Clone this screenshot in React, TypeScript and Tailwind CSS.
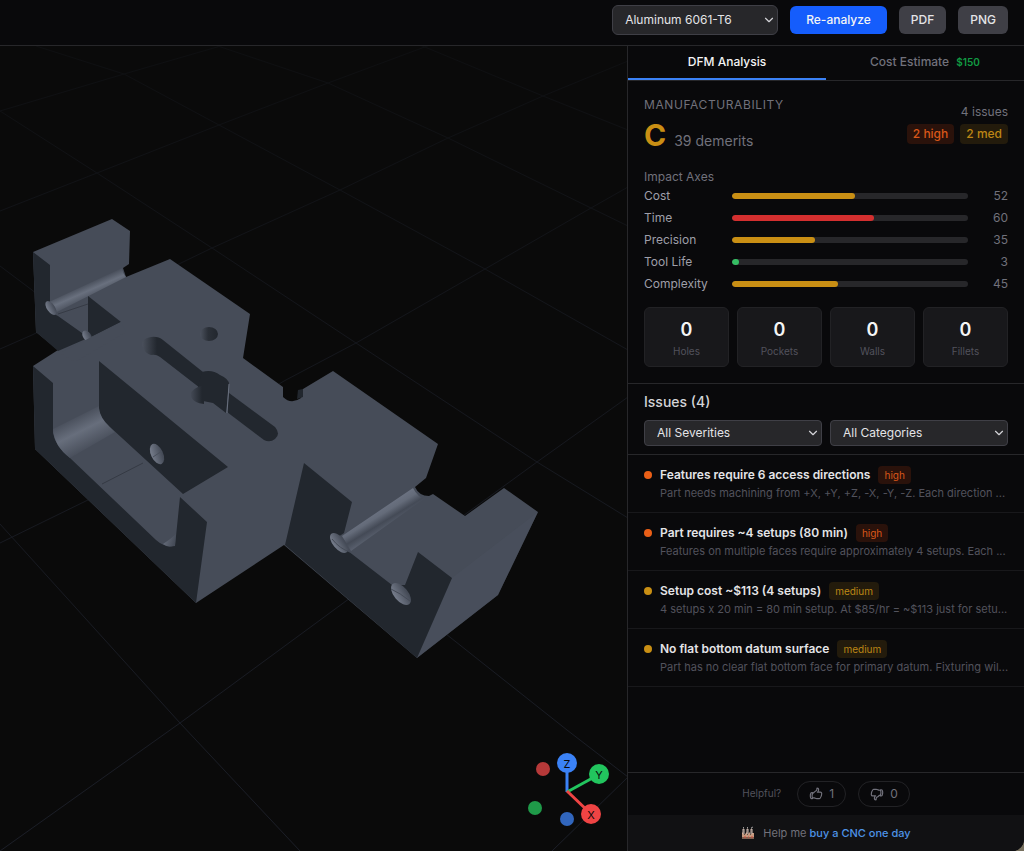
import { ReactNode, useState } from 'react';
import { ChevronDown } from 'lucide-react';
import { HiOutlineHandThumbDown, HiOutlineHandThumbUp } from 'react-icons/hi2';
import clsx from 'clsx';

const axes = [
  { label: 'Cost', value: 52, color: 'bg-[#c98f14]' },
  { label: 'Time', value: 60, color: 'bg-[#d42f2f]' },
  { label: 'Precision', value: 35, color: 'bg-[#c98f14]' },
  { label: 'Tool Life', value: 3, color: 'bg-[#35bd63]' },
  { label: 'Complexity', value: 45, color: 'bg-[#c98f14]' },
];

const features = ['Holes', 'Pockets', 'Walls', 'Fillets'];

const issues = [
  {
    title: 'Features require 6 access directions',
    severity: 'high',
    detail: 'Part needs machining from +X, +Y, +Z, -X, -Y, -Z. Each direction ...',
  },
  {
    title: 'Part requires ~4 setups (80 min)',
    severity: 'high',
    detail: 'Features on multiple faces require approximately 4 setups. Each ...',
  },
  {
    title: 'Setup cost ~$113 (4 setups)',
    severity: 'medium',
    detail: '4 setups x 20 min = 80 min setup. At $85/hr = ~$113 just for setu...',
  },
  {
    title: 'No flat bottom datum surface',
    severity: 'medium',
    detail: 'Part has no clear flat bottom face for primary datum. Fixturing wil...',
  },
];

const gridLines = [
  '0,524 180,723 300,851',
  '0,266 32,290 446,634 567,730 628,777',
  '0,111 97,173 212,248 356,343 537,462 628,518',
  '36,46 124,74 219,125 340,190 485,269 628,350',
  '200,40 328,83 448,138 591,208 628,226',
  '420,45 543,96 628,130',
  '0,851 180,723 346,601 537,462 628,397',
  '0,543 92,498 284,381 356,343 485,269 591,208 628,187',
  '0,349 32,335 212,248 340,190 448,138 543,96 628,61',
  '0,211 97,173 219,125 328,83 430,45',
  '0,111 124,74 224,45',
  '628,777 552,851',
];

function Viewport() {
  return (
    <svg
      className="absolute inset-0 h-full w-full"
      viewBox="0 46 627 805"
      preserveAspectRatio="xMinYMin slice"
      role="img"
      aria-label="3D part preview"
    >
      <defs>
        <linearGradient id="grid" x1="0" y1="45" x2="0" y2="851" gradientUnits="userSpaceOnUse">
          <stop offset="0" stopColor="#0e0f11" />
          <stop offset="0.4" stopColor="#15171d" />
          <stop offset="1" stopColor="#1b1e27" />
        </linearGradient>
        <linearGradient id="pipeA" x1="84" y1="284" x2="91" y2="300" gradientUnits="userSpaceOnUse">
          <stop offset="0" stopColor="#464c58" />
          <stop offset="0.45" stopColor="#69707e" />
          <stop offset="1" stopColor="#464c58" />
        </linearGradient>
        <linearGradient id="pipeB" x1="377" y1="511" x2="388" y2="529" gradientUnits="userSpaceOnUse">
          <stop offset="0" stopColor="#6a7180" />
          <stop offset="0.25" stopColor="#646b79" />
          <stop offset="0.6" stopColor="#444a56" />
          <stop offset="1" stopColor="#5b6270" />
        </linearGradient>
        <linearGradient id="fillet" x1="75" y1="415" x2="92" y2="449" gradientUnits="userSpaceOnUse">
          <stop offset="0" stopColor="#464c58" />
          <stop offset="0.45" stopColor="#676e7c" />
          <stop offset="1" stopColor="#464c58" />
        </linearGradient>
        <linearGradient id="bore" x1="0" y1="0" x2="1" y2="0.3">
          <stop offset="0" stopColor="#7d8493" />
          <stop offset="1" stopColor="#454b57" />
        </linearGradient>
        <linearGradient id="recess" x1="0" y1="0" x2="1" y2="0">
          <stop offset="0" stopColor="#4b515d" />
          <stop offset="0.45" stopColor="#2b3038" />
          <stop offset="1" stopColor="#22272e" />
        </linearGradient>
        <linearGradient id="slot" x1="141" y1="0" x2="157" y2="0" gradientUnits="userSpaceOnUse">
          <stop offset="0" stopColor="#4d535f" />
          <stop offset="1" stopColor="#22272e" />
        </linearGradient>
        <linearGradient id="cutter" x1="190" y1="0" x2="202" y2="0" gradientUnits="userSpaceOnUse">
          <stop offset="0" stopColor="#464c58" />
          <stop offset="1" stopColor="#22272e" />
        </linearGradient>
      </defs>

      {/* Floor grid */}
      <g fill="none" stroke="url(#grid)" strokeWidth="1">
        {gridLines.map((points) => (
          <polyline key={points} points={points} />
        ))}
      </g>

      {/* Body */}
      <path
        fill="#464c58"
        d="M33 252L112 219L130 231L129 264L123 268L126 277L170 259L250 314L243 358L283 387V397Q291 405 301 398L303 389L333 371L438 444L426 478L415 487Q419 496 429 496L433 494L465 516L504 488L538 512L498 595L417 658L284 545L196 603L35 449L33 366L58 350L36 332Z"
      />
      <path fill="#4c5260" opacity="0.45" d="M452 578L538 512L498 595L417 658Z" />
      <path fill="#22272e" d="M297 399L298 390L303 389V397Z" />

      {/* Rear left arm */}
      <path fill="url(#pipeA)" d="M49 302L122 268Q123 274 126 277L55 313Z" />
      <path fill="#22272e" d="M33 252L50 265V301Q45 306 50 312L58 316L82 333L88 338L58 351L36 332Z" />
      <path fill="#22272e" d="M88 296L121 322L91 337L88 332Z" />
      <ellipse cx="51" cy="308" rx="4" ry="8" transform="rotate(-35 51 308)" fill="url(#bore)" />
      <path d="M58 314L88 304" stroke="#363b45" />
      <ellipse cx="87" cy="336" rx="4" ry="6" transform="rotate(-35 87 336)" fill="url(#bore)" />
      <path fill="#464c58" d="M60 353L121 322L126 332L75 362Z" />

      {/* Front pocket */}
      <path fill="#22272e" d="M33 366L53 383V433Q55 446 70 458L156 540Q165 548 175 546L180 497L207 522L196 603L35 449Z" />
      <path fill="url(#fillet)" d="M53 429L99 406Q100 418 110 427L115 432L70 458Q54 446 53 429Z" />
      <path fill="#22272e" d="M99 361L228 467L183 494L110 427Q100 418 99 408Z" />
      <path d="M102 484L143 463" stroke="#353a44" />
      <path fill="url(#bore)" opacity="0.7" d="M163 544Q172 538 176 534L175 545Q169 549 163 544Z" />
      <ellipse cx="157" cy="454" rx="6" ry="11" transform="rotate(-25 157 454)" fill="url(#bore)" />
      <path d="M153 457L162 451" stroke="#4a505c" />

      {/* Top slot and holes */}
      <ellipse cx="209" cy="334" rx="9" ry="7" fill="url(#recess)" />
      <path fill="url(#slot)" d="M142 345Q142 338 151 337Q158 336 163 340L203 372L200 388L160 357Q156 354 151 355Q144 353 142 345Z" />
      <path fill="#22272e" d="M202 372Q212 369 220 375Q229 379 229 384L226 413L213 403L198 400V386Z" />
      <path fill="url(#cutter)" d="M198 387L204 385V404Q194 403 191 397Q189 391 198 387Z" />
      <path fill="#22272e" d="M229 393L275 427Q281 434 275 439Q270 443 264 440L227 412Z" />
      <path d="M229 384L227 413" stroke="#69707e" />

      {/* Right arm */}
      <path fill="url(#pipeB)" d="M342 536L413 488Q418 498 425 498L351 551Z" />
      <path
        fill="#22272e"
        d="M304 463L352 502L344 533L332 541L348 551L392 585L405 585L418 552L452 578L417 658L285 545Z"
      />
      <ellipse cx="339" cy="543" rx="6" ry="12" transform="rotate(-40 339 543)" fill="url(#bore)" />
      <path d="M332 539Q340 549 350 552" fill="none" stroke="#454b57" />
      <ellipse cx="401" cy="594" rx="7" ry="13" transform="rotate(-40 401 594)" fill="url(#bore)" />
      <path d="M391 589Q400 593 410 601" fill="none" stroke="#454b57" />

      {/* Axis gizmo */}
      <g strokeWidth="3">
        <path d="M567 792V764" stroke="#3b82f6" />
        <path d="M567 792L598 775" stroke="#22c55e" />
        <path d="M567 791L591 814" stroke="#ef4444" />
      </g>
      <circle cx="543" cy="769" r="7" fill="#b63939" />
      <circle cx="535" cy="808" r="7" fill="#1f9a49" />
      <circle cx="567" cy="819" r="7" fill="#3166bd" />
      <circle cx="567" cy="763" r="10" fill="#3b82f6" />
      <circle cx="599" cy="774" r="10" fill="#22c55e" />
      <circle cx="591" cy="814" r="10" fill="#ef4444" />
      <g fill="#0a0a0a" fontSize="11" textAnchor="middle" fontFamily="Inter, sans-serif">
        <text x="567" y="768">Z</text>
        <text x="599" y="779">Y</text>
        <text x="591" y="819">X</text>
      </g>
    </svg>
  );
}

function FactoryIcon() {
  return (
    <svg width="14" height="14" viewBox="0 0 14 14" aria-hidden="true">
      <path d="M1 13V7L3 5V9L6 6V9L9 6V9L11 7H13V13Z" fill="#c79a80" />
      <path d="M2 8V3H3V8M6 8V3H7V8M10 8V3H11V8" stroke="#d8c5ba" />
      <path d="M2 2L3 1M6 2L7 1M10 2L12 1" stroke="#9a9a9a" />
      <path d="M1 11H13V13H1Z" fill="#80604f" />
      <path d="M3 11H5M7 11H8M10 11H12" stroke="#d24d3c" />
    </svg>
  );
}

function Select({ label, option, className }: { label: string; option: string; className: string }) {
  return (
    <div className="relative">
      <select
        aria-label={label}
        className={clsx(
          'w-full appearance-none border border-[#3f3f46] bg-[#27272a] pl-3 pr-7 text-xs text-zinc-200 outline-none',
          className
        )}
      >
        <option>{option}</option>
      </select>
      <ChevronDown className="pointer-events-none absolute right-0.5 top-1/2 h-3.5 w-3.5 -translate-y-1/2 text-zinc-300" />
    </div>
  );
}

function Badge({ severity, className, children }: { severity: string; className: string; children: ReactNode }) {
  return (
    <span
      className={clsx(
        'rounded',
        severity === 'high' ? 'bg-[#2a120b] text-[#d95719]' : 'bg-[#231b0c] text-[#bd8615]',
        className
      )}
    >
      {children}
    </span>
  );
}

export default function App() {
  const [tab, setTab] = useState('dfm');

  return (
    <div className="h-screen bg-[#77705f]">
      <div className="flex h-full flex-col overflow-hidden rounded-br-xl bg-[#09090b] font-['Inter',sans-serif] text-zinc-200">
        <header className="flex items-center justify-end gap-3 border-b border-zinc-800 px-4 pb-2.5 pt-[5px]">
          <div className="w-[166px]">
            <Select label="Material" option="Aluminum 6061-T6" className="h-[30px] rounded-md" />
          </div>
          <button className="h-7 rounded-md bg-[#155dfc] px-4 text-xs font-medium text-zinc-100">Re-analyze</button>
          <button className="h-7 rounded-md bg-[#3f3f46] px-3 text-xs font-medium text-zinc-200">PDF</button>
          <button className="h-7 rounded-md bg-[#3f3f46] px-3 text-xs font-medium text-zinc-200">PNG</button>
        </header>

        <div className="flex min-h-0 flex-1">
          <main className="relative min-w-0 flex-1 bg-[#0a0a0a]">
            <Viewport />
          </main>

          <aside className="flex w-[397px] shrink-0 flex-col border-l border-zinc-800">
            <div className="flex border-b border-zinc-800 text-xs font-medium" role="tablist">
              <button
                role="tab"
                aria-selected={tab === 'dfm'}
                onClick={() => setTab('dfm')}
                className={clsx(
                  'h-[34px] flex-1 border-b-2',
                  tab === 'dfm' ? 'border-[#3b82f6] text-zinc-100' : 'border-transparent text-zinc-500'
                )}
              >
                DFM Analysis
              </button>
              <button
                role="tab"
                aria-selected={tab === 'cost'}
                onClick={() => setTab('cost')}
                className={clsx(
                  'h-[34px] flex-1 border-b-2',
                  tab === 'cost' ? 'border-[#3b82f6] text-zinc-100' : 'border-transparent text-zinc-500'
                )}
              >
                Cost Estimate <span className="ml-1 text-[10px] font-semibold text-[#119b43]">$150</span>
              </button>
            </div>

            <section className="border-b border-zinc-800 p-4">
              <div className="flex items-end justify-between">
                <div>
                  <h2 className="text-xs leading-4 tracking-wider text-zinc-500">MANUFACTURABILITY</h2>
                  <div className="mt-1 flex items-baseline gap-2">
                    <span className="text-3xl font-bold text-[#c98f14]">C</span>
                    <span className="text-sm text-zinc-500">39 demerits</span>
                  </div>
                </div>
                <div className="pb-[9px] text-right text-xs">
                  <div className="mb-1 text-zinc-500">4 issues</div>
                  <div className="flex gap-1.5 font-medium">
                    <Badge severity="high" className="px-1.5 py-0.5">2 high</Badge>
                    <Badge severity="medium" className="px-1.5 py-0.5">2 med</Badge>
                  </div>
                </div>
              </div>

              <div className="mt-4 text-xs leading-4 text-zinc-500">Impact Axes</div>
              <div className="mt-[3px] flex flex-col gap-1.5">
                {axes.map(({ label, value, color }) => (
                  <div key={label} className="flex items-center text-xs leading-4">
                    <span className="w-[88px] text-zinc-400">{label}</span>
                    <div className="h-1.5 flex-1 overflow-hidden rounded-full bg-[#27272a]">
                      <div className={clsx('h-full rounded-full', color)} style={{ width: `${value}%` }} />
                    </div>
                    <span className="w-10 text-right text-zinc-500">{value}</span>
                  </div>
                ))}
              </div>

              <div className="mt-[15px] grid grid-cols-4 gap-2">
                {features.map((name) => (
                  <div key={name} className="rounded-md border border-[#222225] bg-[#18181b] py-2 text-center">
                    <div className="text-lg font-semibold leading-7 text-zinc-100">0</div>
                    <div className="text-[10px] leading-[14px] text-zinc-600">{name}</div>
                  </div>
                ))}
              </div>
            </section>

            <section className="border-b border-zinc-800 px-4 pb-2 pt-2">
              <h2 className="text-sm font-medium text-zinc-300">Issues (4)</h2>
              <div className="mt-[7px] grid grid-cols-2 gap-2">
                <Select label="Severity" option="All Severities" className="h-[26px] rounded" />
                <Select label="Category" option="All Categories" className="h-[26px] rounded" />
              </div>
            </section>

            <ul className="flex-1">
              {issues.map(({ title, severity, detail }) => (
                <li key={title} className="border-b border-[#18181b] px-4 py-2.5">
                  <div className="flex h-5 items-center gap-2">
                    <span className={clsx('h-2 w-2 rounded-full', severity === 'high' ? 'bg-[#ea5f17]' : 'bg-[#c98f14]')} />
                    <span className="text-xs font-semibold text-zinc-200">{title}</span>
                    <Badge severity={severity} className="px-1.5 text-[10px] leading-[18px]">{severity}</Badge>
                  </div>
                  <p className="whitespace-nowrap pl-4 text-[11px] leading-[17px] text-zinc-600">{detail}</p>
                </li>
              ))}
            </ul>

            <div className="flex items-center justify-center gap-3 border-t border-zinc-800 py-2 text-xs text-zinc-500">
              <span className="mr-1 text-[10px] text-zinc-600">Helpful?</span>
              <button aria-label="Helpful" className="flex h-[26px] items-center gap-1.5 rounded-full border border-[#222225] px-[11px]">
                <HiOutlineHandThumbUp className="h-3.5 w-3.5 [&_path]:stroke-2" />1
              </button>
              <button aria-label="Not helpful" className="flex h-[26px] items-center gap-1.5 rounded-full border border-[#222225] px-[11px]">
                <HiOutlineHandThumbDown className="h-3.5 w-3.5 [&_path]:stroke-2" />0
              </button>
            </div>
            <footer className="flex h-9 items-center justify-center gap-2 bg-[#111113] text-[11px] text-zinc-500">
              <FactoryIcon />
              <span>
                Help me <a href="#" className="font-medium text-[#4e93e6]">buy a CNC one day</a>
              </span>
            </footer>
          </aside>
        </div>
      </div>
    </div>
  );
}
